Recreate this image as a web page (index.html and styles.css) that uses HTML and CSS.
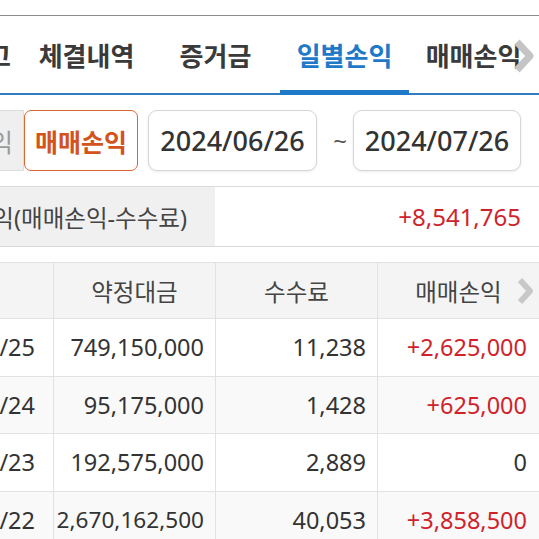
FILE: index.html
```html
<!DOCTYPE html>
<html lang="ko">
<head>
<meta charset="utf-8">
<link rel="stylesheet" href="styles.css">
</head>
<body>
<div class="topbar"></div>
<nav class="tabs">
  <div class="tab tab-first">주식잔고</div>
  <div class="tab">체결내역</div>
  <div class="tab">증거금</div>
  <div class="tab active">일별손익</div>
  <div class="tab">매매손익</div>
  <span class="tab-more"><svg width="26" height="38" viewBox="0 0 26 38"><path d="M6 5 L19 19 L6 33" fill="none" stroke="#c4c4c4" stroke-width="7" stroke-linejoin="round"/></svg></span>
</nav>
<div class="content">
  <div class="filter">
    <div class="seg">
      <div class="seg-btn">일별손익</div>
      <div class="seg-btn on">매매손익</div>
    </div>
    <div class="date">2024/06/26</div>
    <span class="tilde">~</span>
    <div class="date">2024/07/26</div>
  </div>
  <div class="summary">
    <div class="sum-label">실현손익(매매손익-수수료)</div>
    <div class="sum-value">+8,541,765</div>
  </div>
  <table class="grid">
    <thead>
      <tr><th>일자</th><th>약정대금</th><th>수수료</th><th class="th-last">매매손익<span class="th-more"><svg width="22" height="30" viewBox="0 0 22 30"><path d="M6 4 L16 15 L6 26" fill="none" stroke="#c8c8c8" stroke-width="6" stroke-linejoin="round"/></svg></span></th></tr>
    </thead>
    <tbody>
      <tr><td class="d">2024/07/25</td><td>749,150,000</td><td>11,238</td><td class="up">+2,625,000</td></tr>
      <tr class="alt"><td class="d">2024/07/24</td><td>95,175,000</td><td>1,428</td><td class="up">+625,000</td></tr>
      <tr><td class="d">2024/07/23</td><td>192,575,000</td><td>2,889</td><td>0</td></tr>
      <tr class="alt"><td class="d">2024/07/22</td><td class="long">2,670,162,500</td><td>40,053</td><td class="up">+3,858,500</td></tr>
    </tbody>
  </table>
</div>
</body>
</html>
```
FILE: styles.css
```css
html, body {
  margin: 0;
  padding: 0;
  background: #fff;
  overflow: hidden;
}
body {
  width: 539px;
  height: 539px;
  font-family: "Noto Sans", "Noto Sans CJK KR", sans-serif;
  color: #333;
}
.topbar {
  height: 15px;
  border-bottom: 1px solid #8c8c8c;
  background: #fff;
}
.tabs {
  position: relative;
  display: flex;
  height: 77px;
  border-bottom: 2px solid #2f7cc1;
  white-space: nowrap;
}
.tab {
  position: relative;
  flex: none;
  width: 129px;
  display: flex;
  align-items: center;
  justify-content: center;
  font-family: "Noto Sans CJK KR", sans-serif;
  font-size: 26px;
  font-weight: 700;
  color: #3a3a3a;
}
.tab-first {
  margin-left: -107px;
  justify-content: flex-end;
  padding-right: 11px;
  box-sizing: border-box;
}
.tab.active {
  color: #1f79c9;
}
.tab.active::after {
  content: "";
  position: absolute;
  left: 0;
  right: 0;
  bottom: -2px;
  height: 5px;
  background: #1f79c9;
}
.tab-more {
  position: absolute;
  right: 2px;
  top: 21px;
  width: 26px;
  height: 38px;
}
.content {
  margin-left: -109px;
  width: 648px;
}
.filter {
  display: flex;
  align-items: center;
  height: 91px;
  padding-left: 19px;
  box-sizing: border-box;
}
.seg {
  display: flex;
  height: 61px;
}
.seg-btn {
  width: 114px;
  box-sizing: border-box;
  display: flex;
  align-items: center;
  justify-content: center;
  font-family: "Noto Sans CJK KR", sans-serif;
  font-size: 25px;
  color: #9a9a9a;
  background: #efefef;
  border: 1px solid #dcdcdc;
  border-radius: 7px 0 0 7px;
}
.seg-btn.on {
  background: #fff;
  color: #d4521b;
  font-weight: 700;
  border-color: #d8662f;
  border-radius: 7px;
}
.date {
  width: 169px;
  height: 61px;
  box-sizing: border-box;
  margin-left: 10px;
  display: flex;
  align-items: center;
  justify-content: center;
  border: 1px solid #d6d6d6;
  border-radius: 9px;
  box-shadow: 0 1px 3px rgba(0,0,0,0.08);
  background: #fff;
  font-size: 27px;
  font-weight: 500;
  color: #333;
}
.tilde {
  width: 26px;
  margin-left: 10px;
  text-align: center;
  font-size: 24px;
  color: #555;
}
.tilde + .date {
  margin-left: 0;
  width: 168px;
}
.summary {
  display: flex;
  height: 59px;
  border-top: 1px solid #dadada;
  border-bottom: 1px solid #dadada;
}
.sum-label {
  width: 324px;
  background: #f0f0f0;
  display: flex;
  align-items: center;
  justify-content: flex-end;
  padding-right: 28px;
  box-sizing: border-box;
  font-size: 23.5px;
  color: #444;
}
.sum-value {
  flex: 1;
  display: flex;
  align-items: center;
  justify-content: flex-end;
  padding-right: 18px;
  font-size: 24px;
  color: #cf232b;
}
.grid {
  margin-top: 15px;
  width: 648px;
  border-collapse: collapse;
  table-layout: fixed;
}
.grid th, .grid td {
  width: 162px;
  border: 1px solid #e2e2e2;
  font-size: 23.5px;
  font-weight: 400;
  padding: 0 11px 0 0;
  box-sizing: border-box;
  white-space: nowrap;
}
.grid th {
  height: 56px;
  background: #f4f4f4;
  color: #444;
  padding: 0;
  text-align: center;
}
.grid td {
  height: 57.5px;
  text-align: right;
  color: #333;
}
.grid td.d {
  text-align: center;
  padding: 0;
}
.grid td.long {
  font-size: 22.6px;
}
.grid tr.alt td {
  background: #f9f9f9;
}
.grid td.up {
  color: #cf232b;
}
.grid td:last-child {
  padding-right: 12px;
}
.th-last {
  position: relative;
}
.th-more {
  position: absolute;
  right: 3px;
  top: 13px;
  width: 22px;
  height: 30px;
}
```
